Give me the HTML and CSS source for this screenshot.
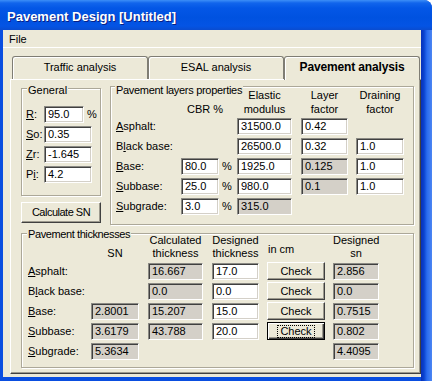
FILE: index.html
```html
<!DOCTYPE html>
<html>
<head>
<meta charset="utf-8">
<link rel="stylesheet" href="styles.css">
</head>
<body>
<div class="window">
  <div class="titlebar"><span class="title">Pavement Design [Untitled]</span></div>
  <div class="frame">
    <div class="client">
      <div class="menubar"><span class="menu-item">File</span></div>
      <div class="tabctl">
        <div class="tabstrip">
          <div class="tab">Traffic analysis</div>
          <div class="tab">ESAL analysis</div>
          <div class="tab active">Pavement analysis</div>
        </div>
        <div class="panel">
          <div class="top-row">
            <div class="left-col">
              <div class="group general">
                <div class="legend">General</div>
                <div class="gen-grid">
                  <span class="lbl"><u>R</u>:</span>
                  <div class="fwrap"><div class="field w40">95.0</div><span class="pct">%</span></div>
                  <span class="lbl"><u>S</u>o:</span>
                  <div class="field">0.35</div>
                  <span class="lbl"><u>Z</u>r:</span>
                  <div class="field">-1.645</div>
                  <span class="lbl">P<u>i</u>:</span>
                  <div class="field">4.2</div>
                </div>
              </div>
              <div class="btn calc">Calculate SN</div>
            </div>
            <div class="group layers">
              <div class="legend">Pavement layers properties</div>
              <div class="lay-grid">
                <div class="hdr cbr">CBR %</div>
                <div class="hdr c4">Elastic<br>modulus</div>
                <div class="hdr c5">Layer<br>factor</div>
                <div class="hdr c6">Draining<br>factor</div>

                <span class="lbl c1 r2"><u>A</u>sphalt:</span>
                <div class="field c4 r2">31500.0</div>
                <div class="field c5 r2 w47">0.42</div>

                <span class="lbl c1 r3">B<u>l</u>ack base:</span>
                <div class="field c4 r3">26500.0</div>
                <div class="field c5 r3 w47">0.32</div>
                <div class="field c6 r3 w48">1.0</div>

                <span class="lbl c1 r4"><u>B</u>ase:</span>
                <div class="field c2 r4">80.0</div>
                <span class="pct c3 r4">%</span>
                <div class="field c4 r4">1925.0</div>
                <div class="field c5 r4 w47 dis">0.125</div>
                <div class="field c6 r4 w48">1.0</div>

                <span class="lbl c1 r5"><u>S</u>ubbase:</span>
                <div class="field c2 r5">25.0</div>
                <span class="pct c3 r5">%</span>
                <div class="field c4 r5">980.0</div>
                <div class="field c5 r5 w47 dis">0.1</div>
                <div class="field c6 r5 w48">1.0</div>

                <span class="lbl c1 r6"><u>S</u>ubgrade:</span>
                <div class="field c2 r6">3.0</div>
                <span class="pct c3 r6">%</span>
                <div class="field c4 r6 dis">315.0</div>
              </div>
            </div>
          </div>
          <div class="group thick">
            <div class="legend">Pavement thicknesses</div>
            <div class="th-grid">
              <div class="hdr t2 one">SN</div>
              <div class="hdr t3">Calculated<br>thickness</div>
              <div class="hdr t4">Designed<br>thickness</div>
              <div class="hdr t5 incm">in cm</div>
              <div class="hdr t6">Designed<br>sn</div>

              <span class="lbl t1 r2"><u>A</u>sphalt:</span>
              <div class="field t3 r2 w55 dis">16.667</div>
              <div class="field t4 r2 w47">17.0</div>
              <div class="btn chk t5 r2">Check</div>
              <div class="field t6 r2 w46 dis">2.856</div>

              <span class="lbl t1 r3">B<u>l</u>ack base:</span>
              <div class="field t3 r3 w55 dis">0.0</div>
              <div class="field t4 r3 w47">0.0</div>
              <div class="btn chk t5 r3">Check</div>
              <div class="field t6 r3 w46 dis">0.0</div>

              <span class="lbl t1 r4"><u>B</u>ase:</span>
              <div class="field t2 r4 dis">2.8001</div>
              <div class="field t3 r4 w55 dis">15.207</div>
              <div class="field t4 r4 w47">15.0</div>
              <div class="btn chk t5 r4">Check</div>
              <div class="field t6 r4 w46 dis">0.7515</div>

              <span class="lbl t1 r5"><u>S</u>ubbase:</span>
              <div class="field t2 r5 dis">3.6179</div>
              <div class="field t3 r5 w55 dis">43.788</div>
              <div class="field t4 r5 w47">20.0</div>
              <div class="btn chk t5 r5 default"><span class="focus">Check</span></div>
              <div class="field t6 r5 w46 dis">0.802</div>

              <span class="lbl t1 r6"><u>S</u>ubgrade:</span>
              <div class="field t2 r6 dis">5.3634</div>
              <div class="field t6 r6 w46 dis">4.4095</div>
            </div>
          </div>
        </div>
      </div>
    </div>
  </div>
</div>
</body>
</html>
```

FILE: styles.css
```css
* { box-sizing: border-box; }
html, body { margin: 0; padding: 0; }
body {
  width: 432px;
  height: 381px;
  overflow: hidden;
  background: #ffffff;
  font-family: "Liberation Sans", Arial, sans-serif;
  font-size: 11px;
  color: #000;
}
.window {
  width: 432px;
  height: 381px;
  background: #0b4fd6;
  border-top-right-radius: 8px;
  overflow: hidden;
  display: flex;
  flex-direction: column;
}
.titlebar {
  height: 30px;
  flex: none;
  padding: 6px 0 0 7px;
  background: linear-gradient(#3d8ff7 0px, #1165ec 3px, #0457e6 8px, #0052e0 18px, #0454e4 26px, #0a4cd0 30px);
}
.title {
  color: #fff;
  font-weight: bold;
  font-size: 13px;
  line-height: 15px;
  text-shadow: 1px 1px 0 #0a1f84;
  display: block;
  padding-top: 3px;
}
.frame {
  flex: 1;
  display: flex;
  padding: 0 11px 4px 3px;
  background: linear-gradient(90deg, #0a4ee0 0px, #0a4ee0 421px, #0831b8 421px, #0a43d0 424px, #2a6cf0 427px, #4c86f2 432px);
}
.client {
  flex: 1;
  background: #ece9d8;
  display: flex;
  flex-direction: column;
}
.menubar {
  height: 18px;
  line-height: 18px;
  padding-left: 6px;
  border-bottom: 1px solid #fff;
  flex: none;
}
.tabctl {
  padding-left: 7px;
  display: flex;
  flex-direction: column;
}
.tabstrip {
  display: flex;
  height: 31px;
  align-items: flex-end;
  padding-left: 2px;
}
.tab {
  width: 136px;
  height: 23px;
  line-height: 20px;
  text-align: center;
  border: 1px solid #7f7d74;
  border-bottom: none;
  border-radius: 3px 3px 0 0;
  box-shadow: inset 1px 1px 0 #fff;
  background: #ece9d8;
}
.tab.active {
  font-weight: bold;
  font-size: 12px;
  letter-spacing: -0.15px;
  height: 24px;
  margin-bottom: -1px;
  position: relative;
  z-index: 1;
}
.panel {
  width: 411px;
  height: 295px;
  border-left: 1px solid #fff;
  border-top: 1px solid #fff;
  border-right: 1px solid #404040;
  border-bottom: 1px solid #404040;
  box-shadow: inset -1px -1px 0 #9d9a8e;
  padding-left: 10px;
}
.top-row {
  display: flex;
  gap: 9px;
  height: 145px;
}
.left-col {
  width: 80px;
  display: flex;
  flex-direction: column;
}
.group {
  border: 1px solid #aca899;
  box-shadow: inset 1px 1px 0 #fff, 1px 1px 0 #fff;
}
.legend {
  display: table;
  line-height: 13px;
  padding: 0 1px;
  background: #ece9d8;
  white-space: nowrap;
}
.general {
  width: 80px;
  height: 108px;
  margin-top: 8px;
}
.general .legend { margin: -5px 0 0 5px; }
.gen-grid {
  display: grid;
  grid-template-columns: 18px 48px;
  grid-auto-rows: 17px;
  row-gap: 3px;
  margin: 9px 0 0 4px;
}
.lbl {
  line-height: 17px;
  white-space: nowrap;
}
.fwrap { display: flex; }
.pct { line-height: 17px; padding-left: 3px; }
.field {
  height: 17px;
  width: 100%;
  background: #fff;
  border: 1px solid;
  border-color: #8b8a84 #fff #fff #8b8a84;
  box-shadow: inset 1px 1px 0 #404040, inset -1px -1px 0 #d4d0c8;
  padding: 0 0 0 3px;
  line-height: 15px;
  white-space: nowrap;
  overflow: hidden;
}
.field.dis { background: #d4d0c8; }
.w40 { width: 40px; flex: none; }
.w47 { width: 47px; justify-self: end; }
.w48 { width: 48px; justify-self: end; }
.w55 { width: 55px; justify-self: end; }
.w46 { width: 46px; }
.btn {
  background: #ece9d8;
  border: 1px solid;
  border-color: #fff #404040 #404040 #fff;
  box-shadow: inset -1px -1px 0 #9d9a8e;
  text-align: center;
  white-space: nowrap;
}
.calc {
  margin-top: 6px;
  height: 21px;
  line-height: 19px;
  letter-spacing: -0.5px;
}
.layers {
  width: 304px;
  height: 139px;
  margin-top: 6px;
}
.layers .legend { margin: -3px 0 -9px 4px; letter-spacing: -0.3px; }
.lay-grid {
  display: grid;
  grid-template-columns: 65px 38px 18px 55px 56px 56px;
  grid-template-rows: 27px repeat(5, 17px);
  row-gap: 3px;
  margin-left: 5px;
}
.hdr {
  line-height: 14px;
  text-align: center;
  white-space: nowrap;
  grid-row: 1;
}
.hdr.cbr { grid-column: 2 / span 2; text-align: left; padding-left: 6px; align-self: end; margin-bottom: -1px; }
.hdr.c4 { grid-column: 4; }
.hdr.c5 { grid-column: 5; padding-left: 9px; }
.hdr.c6 { grid-column: 6; padding-left: 8px; }
.c1 { grid-column: 1; }
.c2 { grid-column: 2; }
.c3 { grid-column: 3; }
.c4 { grid-column: 4; }
.c5 { grid-column: 5; }
.c6 { grid-column: 6; }
.r2 { grid-row: 2; }
.r3 { grid-row: 3; }
.r4 { grid-row: 4; }
.r5 { grid-row: 5; }
.r6 { grid-row: 6; }
.thick {
  width: 393px;
  height: 135px;
  margin-top: 8px;
}
.thick .legend { margin: -6px 0 -7px 5px; letter-spacing: -0.4px; }
.th-grid {
  display: grid;
  grid-template-columns: 55px 48px 56px 48px 58px 46px;
  grid-template-rows: 26px repeat(5, 17px);
  column-gap: 8px;
  row-gap: 3px;
  margin-left: 6px;
}
.th-grid .hdr { line-height: 13px; }
.hdr.one { align-self: end; }
.hdr.t3 { padding-left: 1px; }
.hdr.t4 { padding-left: 1px; }
.hdr.incm { text-align: left; padding: 9px 0 0 1px; }
.t1 { grid-column: 1; }
.t2 { grid-column: 2; }
.t3 { grid-column: 3; }
.t4 { grid-column: 4; }
.t5 { grid-column: 5; }
.t6 { grid-column: 6; }
.chk {
  height: 18px;
  margin-top: -1px;
  line-height: 16px;
}
.chk.default {
  border: 1px solid #000;
  box-shadow: inset 1px 1px 0 #fff, inset -1px -1px 0 #404040, inset -2px -2px 0 #9d9a8e;
}
.focus {
  display: inline-block;
  outline: 1px dotted #000;
  outline-offset: 0;
  line-height: 11px;
  padding: 0 2px;
}
```
